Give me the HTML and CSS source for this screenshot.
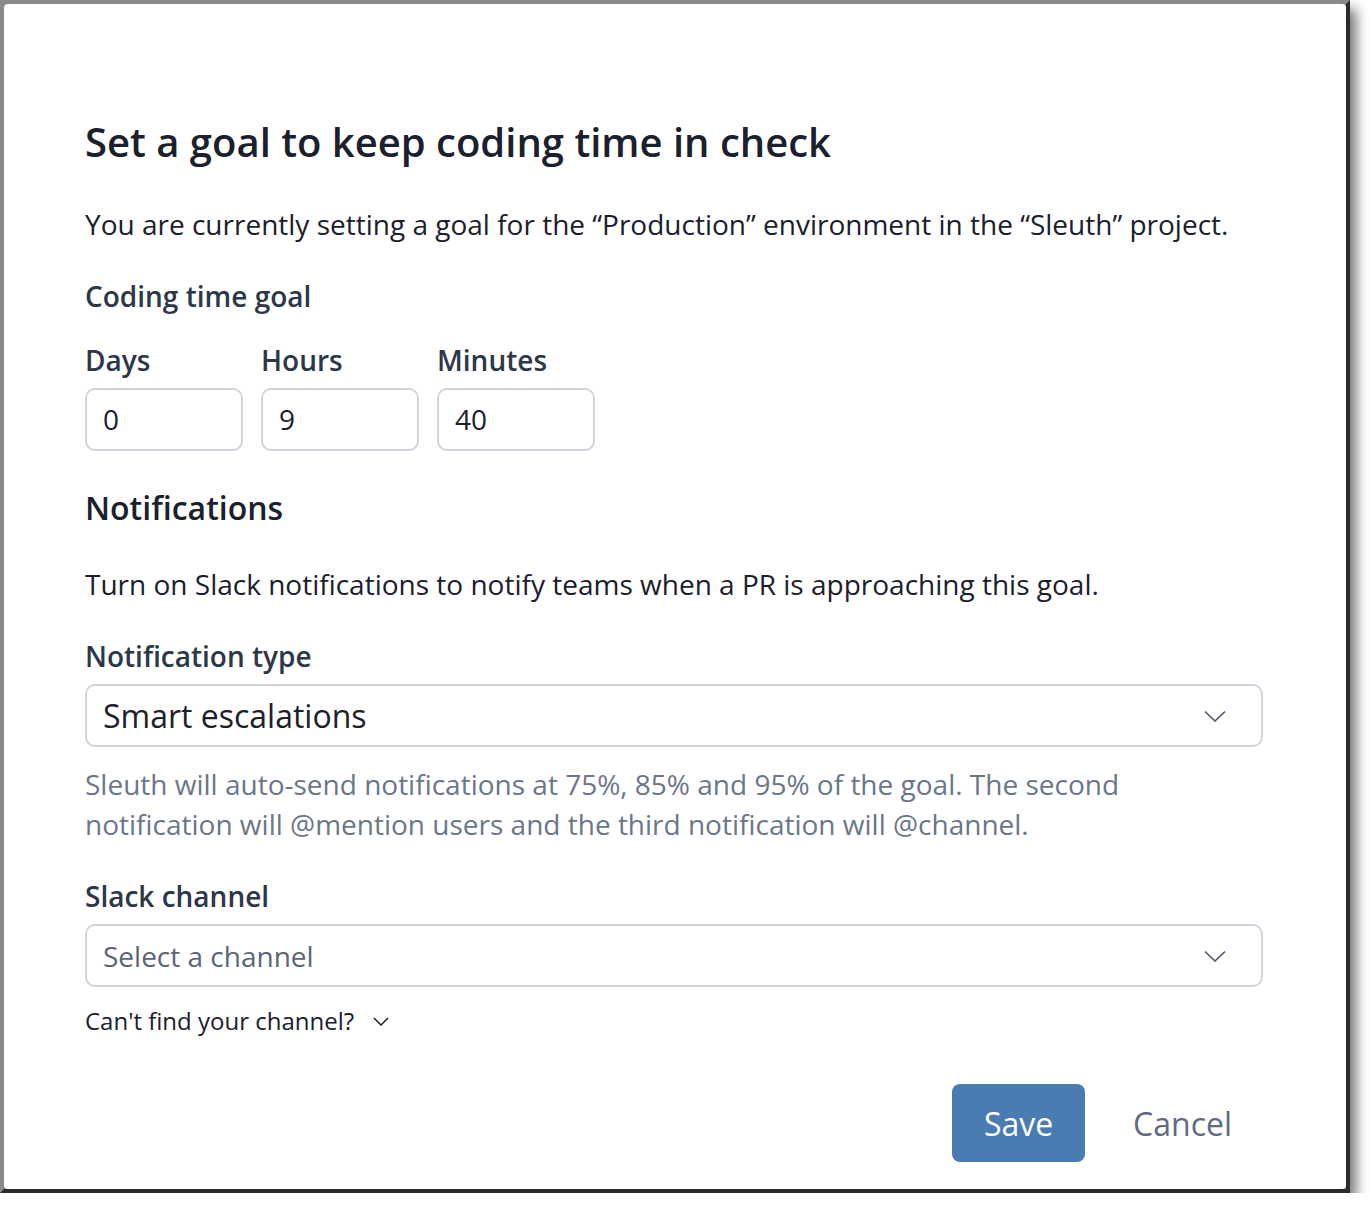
FILE: index.html
```html
<!DOCTYPE html>
<html lang="en">
<head>
<meta charset="utf-8">
<title>Set a goal</title>
<link rel="stylesheet" href="styles.css">
</head>
<body>
<div class="window">
  <div class="modal">
    <h1 class="title">Set a goal to keep coding time in check</h1>
    <p class="intro">You are currently setting a goal for the “Production” environment in the “Sleuth” project.</p>

    <div class="label label-section">Coding time goal</div>
    <div class="time-row">
      <div class="time-field">
        <div class="label">Days</div>
        <div class="input">0</div>
      </div>
      <div class="time-field">
        <div class="label">Hours</div>
        <div class="input">9</div>
      </div>
      <div class="time-field">
        <div class="label">Minutes</div>
        <div class="input">40</div>
      </div>
    </div>

    <h2 class="section-title">Notifications</h2>
    <p class="intro intro-notif">Turn on Slack notifications to notify teams when a PR is approaching this goal.</p>

    <div class="label label-select">Notification type</div>
    <div class="select">
      <span class="select-value">Smart escalations</span>
      <svg class="chevron" width="22" height="12" viewBox="0 0 22 12"><path d="M1 1.5l10 9.5 10-9.5" fill="none" stroke="#4a5568" stroke-width="1.6"/></svg>
    </div>
    <p class="help">Sleuth will auto-send notifications at 75%, 85% and 95% of the goal. The second notification will @mention users and the third notification will @channel.</p>

    <div class="label label-select">Slack channel</div>
    <div class="select">
      <span class="select-placeholder">Select a channel</span>
      <svg class="chevron" width="22" height="12" viewBox="0 0 22 12"><path d="M1 1.5l10 9.5 10-9.5" fill="none" stroke="#4a5568" stroke-width="1.6"/></svg>
    </div>
    <div class="cant-find">
      <span>Can't find your channel?</span>
      <svg width="16" height="9" viewBox="0 0 16 9"><path d="M1 1l7 7 7-7" fill="none" stroke="#1a202c" stroke-width="1.5"/></svg>
    </div>

    <div class="actions">
      <button class="btn-save">Save</button>
      <button class="btn-cancel">Cancel</button>
    </div>
  </div>
</div>
</body>
</html>
```
FILE: styles.css
```css
html, body {
  margin: 0;
  padding: 0;
  background: #ffffff;
}
body {
  font-family: "Open Sans", "Noto Sans", sans-serif;
  color: #1a202c;
}
.window {
  width: 1350px;
  height: 1193px;
  box-sizing: border-box;
  border-top: 4px solid #8a8a8a;
  border-left: 4px solid #8a8a8a;
  border-right: 4px solid #2b2b2b;
  border-bottom: 4px solid #2b2b2b;
  box-shadow: 6px 9px 12px rgba(0, 0, 0, 0.55);
  background: #8a8a8a;
}
.modal {
  background: #ffffff;
  height: 100%;
  box-sizing: border-box;
  border-radius: 4px;
  padding: 113px 83px 0 81px;
}
.title {
  margin: 0;
  font-size: 40px;
  font-weight: 600;
  line-height: 50px;
  color: #1a202c;
}
.intro {
  margin: 37px 0 0;
  font-size: 28px;
  line-height: 40px;
  color: #1a202c;
}
.label {
  font-size: 28px;
  font-weight: 600;
  line-height: 40px;
  color: #2d3748;
}
.label-section {
  margin-top: 32px;
}
.time-row {
  display: flex;
  gap: 18px;
  margin-top: 24px;
}
.time-field .label {
  margin-bottom: 8px;
}
.input {
  width: 158px;
  height: 63px;
  box-sizing: border-box;
  border: 2px solid #cfd5de;
  border-radius: 10px;
  padding: 0 16px;
  font-size: 28px;
  line-height: 59px;
  color: #1a202c;
}
.section-title {
  margin: 37px 0 0;
  font-size: 32px;
  font-weight: 600;
  line-height: 40px;
  color: #1a202c;
}
.intro-notif {
  margin-top: 36px;
}
.label-select {
  margin-top: 32px;
  margin-bottom: 8px;
}
.select {
  height: 63px;
  box-sizing: border-box;
  border: 2px solid #cfd5de;
  border-radius: 10px;
  padding: 0 35px 0 16px;
  display: flex;
  align-items: center;
  justify-content: space-between;
}
.select-value {
  font-size: 32px;
  color: #1a202c;
}
.select-placeholder {
  font-size: 28px;
  color: #5a6578;
}
.help {
  margin: 17px 0 0;
  font-size: 28px;
  line-height: 40px;
  color: #6b7689;
}
.cant-find {
  margin-top: 18px;
  display: flex;
  align-items: center;
  gap: 19px;
  font-size: 24px;
  line-height: 32px;
  color: #1a202c;
}
.actions {
  margin-top: 47px;
  display: flex;
  justify-content: flex-end;
  align-items: center;
  gap: 48px;
  padding-right: 31px;
}
.btn-save {
  width: 133px;
  height: 78px;
  border: none;
  border-radius: 8px;
  background: #4a7bb3;
  color: #ffffff;
  font-family: inherit;
  font-size: 32px;
  padding: 0;
}
.btn-cancel {
  border: none;
  background: none;
  padding: 0;
  font-family: inherit;
  font-size: 32px;
  color: #5f6b80;
}
```
